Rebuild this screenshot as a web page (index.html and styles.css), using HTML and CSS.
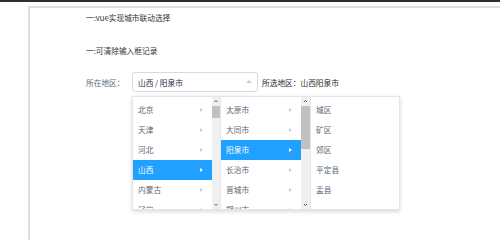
FILE: index.html
```html
<!DOCTYPE html>
<html lang="zh-CN">
<head>
<meta charset="utf-8">
<title>vue城市联动</title>
<link rel="stylesheet" href="styles.css">
</head>
<body>
<div class="topbar"></div>
<div class="page">
  <p class="line l1">一:vue实现城市联动选择</p>
  <p class="line l2">一:可清除输入框记录</p>
  <div class="form-row">
    <span class="label">所在地区：</span>
    <div class="cascader">
      <div class="input"><span class="value">山西 / 阳泉市</span><i class="caret"></i></div>
      <div class="menus">
        <div class="menu">
          <ul class="list">
            <li class="item">北京<i class="arr"></i></li>
            <li class="item">天津<i class="arr"></i></li>
            <li class="item">河北<i class="arr"></i></li>
            <li class="item active">山西<i class="arr"></i></li>
            <li class="item">内蒙古<i class="arr"></i></li>
            <li class="item">辽宁<i class="arr"></i></li>
          </ul>
          <div class="scrollbar">
            <svg class="sb-btn" viewBox="0 0 8 8"><polyline points="2.5,5 4,3.5 5.5,5" /></svg>
            <div class="track"><div class="thumb" style="height:12px"></div></div>
            <svg class="sb-btn" viewBox="0 0 8 8"><polyline points="2.5,3 4,4.5 5.5,3" /></svg>
          </div>
        </div>
        <div class="menu">
          <ul class="list">
            <li class="item">太原市<i class="arr"></i></li>
            <li class="item">大同市<i class="arr"></i></li>
            <li class="item active">阳泉市<i class="arr"></i></li>
            <li class="item">长治市<i class="arr"></i></li>
            <li class="item">晋城市<i class="arr"></i></li>
            <li class="item">朔州市<i class="arr"></i></li>
          </ul>
          <div class="scrollbar">
            <svg class="sb-btn" viewBox="0 0 8 8"><polyline points="2.5,5 4,3.5 5.5,5" /></svg>
            <div class="track"><div class="thumb" style="height:43px"></div></div>
            <svg class="sb-btn" viewBox="0 0 8 8"><polyline points="2.5,3 4,4.5 5.5,3" /></svg>
          </div>
        </div>
        <div class="menu last">
          <ul class="list">
            <li class="item">城区</li>
            <li class="item">矿区</li>
            <li class="item">郊区</li>
            <li class="item">平定县</li>
            <li class="item">盂县</li>
          </ul>
        </div>
      </div>
    </div>
    <span class="selected">所选地区：山西阳泉市</span>
  </div>
</div>
</body>
</html>
```
FILE: styles.css
```css
html, body {
  margin: 0;
  padding: 0;
  background: #fff;
  overflow: hidden;
  height: 100%;
}
body {
  font-family: "Noto Sans CJK SC", "Noto Sans", sans-serif;
  font-size: 7.7px;
  color: #333;
}
.topbar {
  height: 2px;
  background: #2e2e2e;
}
.page {
  margin: 4px 0 0 28px;
  width: 424px;
  height: 240px;
  border: 2px solid #dedede;
  border-bottom: none;
  padding-left: 56px;
  box-sizing: content-box;
}
.line {
  margin: 0;
  line-height: 12px;
  height: 12px;
  color: #333;
}
.l1 { margin-top: 4px; }
.l2 { margin-top: 21px; }
.form-row {
  margin-top: 15px;
  display: flex;
  align-items: center;
  height: 20px;
}
.label {
  width: 46px;
  color: #5e6a78;
}
.cascader {
  position: relative;
  width: 126px;
}
.input {
  height: 20px;
  box-sizing: border-box;
  border: 1px solid #d4dbe4;
  border-radius: 3px;
  display: flex;
  align-items: center;
  justify-content: space-between;
  padding: 0 5px;
  color: #1f2d3d;
}
.caret {
  width: 0;
  height: 0;
  border-left: 3px solid transparent;
  border-right: 3px solid transparent;
  border-bottom: 3.5px solid #c4ccd6;
  margin-top: -1px;
}
.selected {
  margin-left: 4px;
  color: #2a2a2a;
}
.menus {
  position: absolute;
  top: 24px;
  left: 0;
  display: flex;
  height: 112px;
  border: 1px solid #e1e6eb;
  background: #fff;
  box-shadow: 0 2px 4px rgba(0,0,0,.12), 0 0 6px rgba(0,0,0,.04);
  z-index: 2;
}
.menu {
  display: flex;
  height: 112px;
  border-right: 1px solid #e4e8ee;
  overflow: hidden;
}
.menu.last {
  border-right: none;
}
.list {
  list-style: none;
  margin: 0;
  padding: 3px 0 0 0;
  width: 79px;
}
.menu:nth-child(2) .list { width: 80px; }
.menu.last .list { width: 88px; }
.item {
  height: 20px;
  line-height: 20px;
  padding: 0 9px 0 5px;
  display: flex;
  align-items: center;
  justify-content: space-between;
  color: #5a6573;
  white-space: nowrap;
}
.item.active {
  background: #20a0ff;
  color: #fff;
}
.arr {
  width: 0;
  height: 0;
  border-top: 2.5px solid transparent;
  border-bottom: 2.5px solid transparent;
  border-left: 3px solid #c8d2dd;
}
.item.active .arr {
  border-left-color: #fff;
}
.scrollbar {
  width: 8px;
  height: 112px;
  background: #f0f0f0;
  display: flex;
  flex-direction: column;
}
.menu:nth-child(2) .scrollbar { width: 9px; }
.sb-btn {
  width: 100%;
  height: 8px;
  flex: none;
}
.sb-btn polyline {
  fill: none;
  stroke: #505050;
  stroke-width: 1;
}
.track {
  flex: 1;
  padding: 1px 0 0 0;
}
.thumb {
  background: #c1c1c1;
  width: 100%;
}
```
